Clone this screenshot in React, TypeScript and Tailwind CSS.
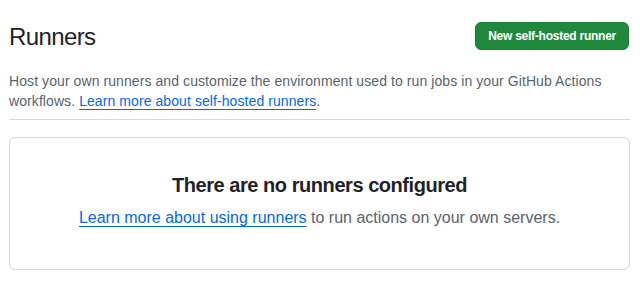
export default function App() {
  return (
    <div className="w-[640px] h-[293px] bg-white px-[9px] pt-[16px] font-['Liberation_Sans',sans-serif]">
      <div className="flex items-center justify-between h-[40px]">
        <h2 className="text-[24px] leading-[36px] pt-[2px] tracking-[-0.6px] text-[#1f2328] font-normal">Runners</h2>
        <button className="h-[28px] px-[12px] rounded-[6px] bg-[#1f883d] border border-[#1a7f37] text-white text-[12px] tracking-[-0.25px] font-bold mr-[2px]">
          New self-hosted runner
        </button>
      </div>
      <p className="mt-[15px] text-[14px] leading-[20px] tracking-[0.08px] text-[#59636e]">
        Host your own runners and customize the environment used to run jobs in your GitHub Actions
        workflows.{" "}
        <a href="#" className="text-[#0969da] underline underline-offset-[3px]">
          Learn more about self-hosted runners
        </a>
        .
      </p>
      <div className="mt-[8px] mr-[1px] border-t border-[#d1d9e0]" />
      <div className="mt-[17px] mr-[1px] h-[133px] pb-[7px] rounded-[6px] border border-[#d1d9e0] flex flex-col items-center justify-center">
        <h3 className="text-[20px] leading-[30px] font-semibold tracking-[-0.45px] text-[#1f2328]">There are no runners configured</h3>
        <p className="text-[16px] leading-[24px] text-[#59636e] mt-[6px]">
          <a href="#" className="text-[#0969da] underline underline-offset-[3px]">
            Learn more about using runners
          </a>{" "}
          to run actions on your own servers.
        </p>
      </div>
    </div>
  );
}
